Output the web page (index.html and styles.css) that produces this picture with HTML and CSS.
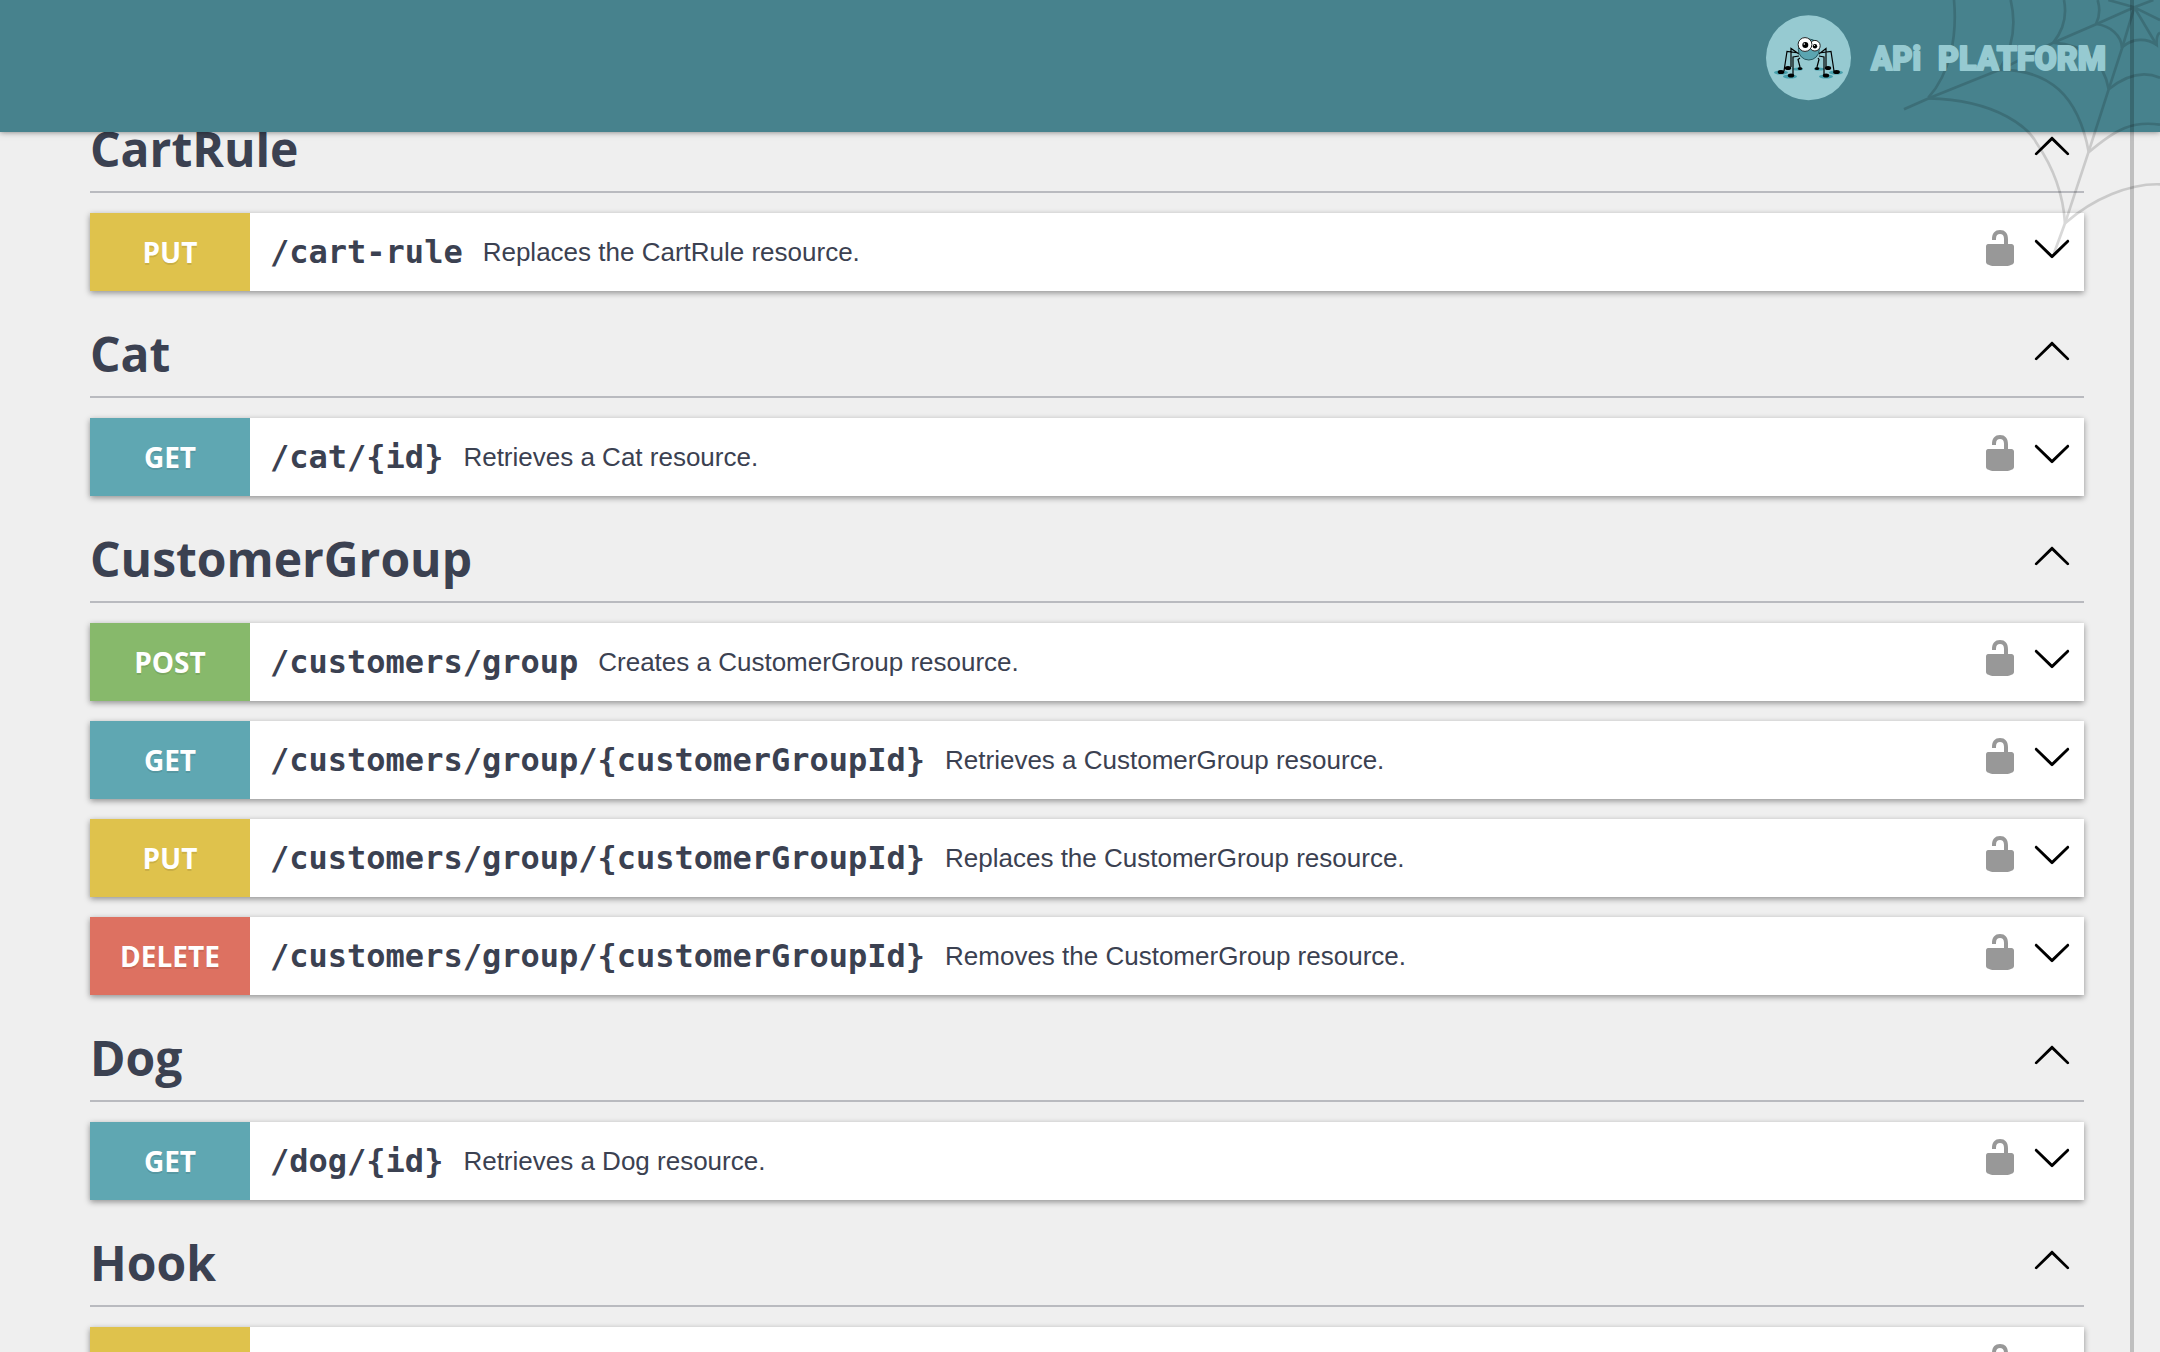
FILE: index.html
```html
<!DOCTYPE html>
<html lang="en">
<head>
<meta charset="utf-8">
<title>API Platform</title>
<link rel="stylesheet" href="styles.css">
</head>
<body>
<svg class="symbols" aria-hidden="true">
  <symbol id="up" viewBox="0 0 20 20"><path d="M17.418 14.908c.272.268.709.268.979 0s.271-.701 0-.969l-7.908-7.83c-.27-.268-.707-.268-.979 0l-7.908 7.83c-.27.268-.27.701 0 .969.271.268.709.268.979 0L10 7.767l7.418 7.141z"/></symbol>
  <symbol id="down" viewBox="0 0 20 20"><path d="M17.418 6.109c.272-.268.709-.268.979 0s.271.701 0 .969l-7.908 7.83c-.27.268-.707.268-.979 0l-7.908-7.83c-.27-.268-.27-.701 0-.969.271-.268.709-.268.979 0L10 13.25l7.418-7.141z"/></symbol>
  <symbol id="unlocked" viewBox="0 0 20 20"><path d="M15.8 8H14V5.6C14 2.703 12.665 1 10 1 7.334 1 6 2.703 6 5.6V6h2v-.801C8 3.754 8.797 3 10 3c1.203 0 2 .754 2 2.199V8H4c-.553 0-1 .646-1 1.199V17c0 .549.428 1.139.951 1.307l1.197.387C5.672 18.861 6.55 19 7.1 19h5.8c.549 0 1.428-.139 1.951-.307l1.196-.387c.524-.167.953-.757.953-1.306V9.199C17 8.646 16.352 8 15.8 8z"/></symbol>
</svg>

<header class="topbar">
  <svg class="brand" viewBox="0 0 360 120" role="img" aria-label="API Platform">
    <circle cx="28.500" cy="57.800" r="42.500" fill="#96cad1"/>
    <g fill="#47a0ad"><ellipse cx="1" cy="72.500" rx="7" ry="2"/><ellipse cx="10" cy="76.500" rx="7" ry="2"/><ellipse cx="46" cy="76.500" rx="7" ry="2"/><ellipse cx="56" cy="72.500" rx="7" ry="2"/><ellipse cx="18" cy="69" rx="5" ry="1.500"/><ellipse cx="39" cy="69" rx="5" ry="1.500"/></g>
    <g fill="none" stroke="#000" stroke-width="1.200">
      <path d="M19 53L7 51.500 4 71M19 54L11 48.500V67M19 56L13 57V75M20 58L18 59.500 20 67"/>
      <path d="M39 53L51 51.500 54 71M39 54L46 48.500V67M39 56L44 57V75M38 58L39 59.500 37 67"/>
    </g>
    <g><ellipse cx="1" cy="72" rx="3.400" ry="2.100"/><ellipse cx="8" cy="68" rx="3.200" ry="2.100"/><ellipse cx="11" cy="75.500" rx="3.200" ry="2.100"/><ellipse cx="20" cy="68.500" rx="2.200" ry="1.500"/><ellipse cx="37" cy="68.500" rx="2.200" ry="1.500"/><ellipse cx="48" cy="68" rx="3.200" ry="2.100"/><ellipse cx="46" cy="75.500" rx="3.200" ry="2.100"/><ellipse cx="56.500" cy="72" rx="3.400" ry="2.100"/></g>
    <circle cx="28.800" cy="49.500" r="10.500" fill="#5ba5b1" stroke="#25565d"/>
    <circle cx="34.900" cy="45.700" r="5.300" fill="#fff" stroke="#222"/>
    <circle cx="25" cy="44.500" r="6.900" fill="#fff" stroke="#222"/>
    <circle cx="25.300" cy="45" r="3"/><circle cx="35" cy="46.200" r="2.200"/>
    <circle cx="24.300" cy="44" r=".8" fill="#fff"/><circle cx="34.400" cy="45.500" r=".6" fill="#fff"/>
    <text class="wordmark" y="69.500"><tspan x="91" textLength="50" lengthAdjust="spacingAndGlyphs">APi</tspan> <tspan x="158" textLength="168" lengthAdjust="spacingAndGlyphs">PLATFORM</tspan></text>
  </svg>
</header>

<svg class="web" viewBox="0 0 1260 900" aria-hidden="true">
  <g fill="none" stroke="#000" stroke-width="8">
    <path d="M1183 22L1070 72L940 128L790 205L570 293L492 328"/>
    <path d="M1183 22L1146 145L1106 268L1046 455L975 670L942 760"/>
    <path d="M1183 22L1250 135M1183 22L1260 60M1183 22L1240 0M1183 22L1105 0"/>
    <path d="M642 0C652 110 630 220 565 293"/>
    <path d="M812 0C830 75 820 140 780 207"/>
    <path d="M972 0C982 50 970 90 940 128"/>
    <path d="M1073 0C1082 30 1078 52 1068 72"/>
    <path d="M565 295C780 300 870 390 890 430C945 510 970 590 975 670"/>
    <path d="M770 210C930 205 1015 290 1046 455"/>
    <path d="M940 128C1030 135 1090 180 1106 268"/>
    <path d="M1070 72C1110 78 1145 105 1146 145"/>
    <path d="M1146 142C1180 112 1222 115 1250 135Q1248 105 1260 98"/>
    <path d="M1106 268C1150 232 1205 210 1260 233"/>
    <path d="M1046 457C1130 385 1180 362 1260 374"/>
    <path d="M975 670C1060 595 1170 550 1260 553"/>
  </g>
</svg>

<main class="operations">
  <section><h2>CartRule<svg><use href="#up"/></svg></h2>
    <div class="op put"><b>PUT</b><code>/cart-rule</code><p>Replaces the CartRule resource.</p><svg class="lock"><use href="#unlocked"/></svg><svg><use href="#down"/></svg></div>
  </section>
  <section><h2>Cat<svg><use href="#up"/></svg></h2>
    <div class="op get"><b>GET</b><code>/cat/{id}</code><p>Retrieves a Cat resource.</p><svg class="lock"><use href="#unlocked"/></svg><svg><use href="#down"/></svg></div>
  </section>
  <section><h2>CustomerGroup<svg><use href="#up"/></svg></h2>
    <div class="op post"><b>POST</b><code>/customers/group</code><p>Creates a CustomerGroup resource.</p><svg class="lock"><use href="#unlocked"/></svg><svg><use href="#down"/></svg></div>
    <div class="op get"><b>GET</b><code>/customers/group/{customerGroupId}</code><p>Retrieves a CustomerGroup resource.</p><svg class="lock"><use href="#unlocked"/></svg><svg><use href="#down"/></svg></div>
    <div class="op put"><b>PUT</b><code>/customers/group/{customerGroupId}</code><p>Replaces the CustomerGroup resource.</p><svg class="lock"><use href="#unlocked"/></svg><svg><use href="#down"/></svg></div>
    <div class="op delete"><b>DELETE</b><code>/customers/group/{customerGroupId}</code><p>Removes the CustomerGroup resource.</p><svg class="lock"><use href="#unlocked"/></svg><svg><use href="#down"/></svg></div>
  </section>
  <section><h2>Dog<svg><use href="#up"/></svg></h2>
    <div class="op get"><b>GET</b><code>/dog/{id}</code><p>Retrieves a Dog resource.</p><svg class="lock"><use href="#unlocked"/></svg><svg><use href="#down"/></svg></div>
  </section>
  <section><h2>Hook<svg><use href="#up"/></svg></h2>
    <div class="op put"><b></b><svg class="lock"><use href="#unlocked"/></svg><svg><use href="#down"/></svg></div>
  </section>
</main>
</body>
</html>
```
FILE: styles.css
```css
* { box-sizing: border-box; }

body {
  margin: 0;
  height: 1352px;
  overflow: hidden;
  background: #efefef;
  color: #3b4151;
  font-family: "Open Sans", sans-serif;
}

.symbols { display: none; }

.topbar {
  position: absolute;
  top: 0;
  left: 0;
  width: 100%;
  height: 132px;
  padding-right: 20px;
  display: flex;
  justify-content: flex-end;
  background: #47828d;
  box-shadow: 0 0 6px rgba(0, 0, 0, .5);
}

/* the logo stays above the cobweb */
.brand {
  position: relative;
  z-index: 4;
  width: 360px;
  height: 120px;
  overflow: visible;
}

.wordmark {
  font: 900 33px "Roboto", sans-serif;
  fill: #96cad1;
  stroke: #96cad1;
  stroke-width: 2;
  stroke-linejoin: round;
}

/* cobweb and thread hang over the page's top right corner */
.web {
  position: absolute;
  z-index: 3;
  top: 0;
  right: 0;
  width: 420px;
  height: 300px;
  opacity: .15;
}

body::after {
  content: "";
  position: absolute;
  z-index: 3;
  top: 0;
  right: 26px;
  width: 4px;
  height: 100%;
  background: rgba(0, 0, 0, .2);
}

.operations {
  height: 1352px;
  overflow: hidden;
  padding: 106px 76px 0 90px;
}

h2 {
  display: flex;
  justify-content: space-between;
  height: 87px;
  margin: 0 0 20px;
  padding: 10px 12px 0 0;
  border-bottom: 2px solid #b9babf;
  font-size: 48px;
  line-height: 66px;
}

h2 svg, .op svg {
  flex: none;
  width: 40px;
  height: 40px;
  fill: #000;
}

h2 svg { margin-top: 9px; }

.op {
  display: flex;
  align-items: center;
  height: 78px;
  margin-bottom: 20px;
  padding-right: 12px;
  background: #fff;
  box-shadow: 0 2px 6px rgba(0, 0, 0, .4);
}

.op b {
  width: 160px;
  height: 78px;
  font-size: 28px;
  line-height: 79px;
  text-align: center;
  color: #fff;
  text-shadow: 0 2px 0 rgba(0, 0, 0, .1);
}

.op code {
  margin-left: 20px;
  font: bold 32px/38px "DejaVu Sans Mono", monospace;
}

.op p {
  margin: 0 0 0 20px;
  font: 26px/30px "Liberation Sans", sans-serif;
}

.op svg { margin: 0 0 8px 12px; }
.op .lock { margin-left: auto; opacity: .4; }

.put b { background: #dfc24c; }
.get b { background: #5fa7b2; }
.post b { background: #87b96b; }
.delete b { background: #dd7161; }
```
